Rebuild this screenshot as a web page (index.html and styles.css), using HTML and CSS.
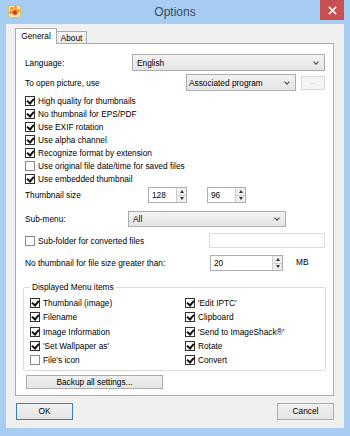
FILE: index.html
```html
<!DOCTYPE html>
<html lang="en">
<head>
    <meta charset="UTF-8">
    <title>Options</title>
    <link rel="stylesheet" href="styles.css">
</head>
<body>
    <div class="window">
        <!-- Title bar -->
        <div class="titlebar">
            <div class="tb-left">
                <svg class="app-icon" viewBox="0 0 14 14">
                    <rect x="0.5" y="0.5" width="13" height="13" rx="2" fill="#f7e7b0" stroke="#d9b860"/>
                    <circle cx="4" cy="4" r="2" fill="#f39a1e"/>
                    <circle cx="8" cy="3" r="1.8" fill="#f39a1e"/>
                    <circle cx="11" cy="6" r="1.8" fill="#f39a1e"/>
                    <circle cx="3" cy="8" r="1.8" fill="#f39a1e"/>
                    <circle cx="7.5" cy="8" r="3" fill="#e8602a"/>
                    <circle cx="7.5" cy="8" r="1.4" fill="#c8202a"/>
                </svg>
            </div>
            <div class="title">Options</div>
            <div class="tb-right">
                <div class="close">
                    <svg viewBox="0 0 10 10" width="9" height="9">
                        <path d="M1 1 L9 9 M9 1 L1 9" stroke="#fff" stroke-width="1.7"/>
                    </svg>
                </div>
            </div>
        </div>

        <!-- Client area -->
        <div class="client">
            <div class="tabs">
                <div class="tab active">General</div>
                <div class="tab">About</div>
            </div>
            <div class="panel">
                <div class="row row-lang">
                    <span class="lbl">Language:</span>
                    <div class="combo w-lang">English<span class="chev"></span></div>
                </div>
                <div class="row row-open">
                    <span class="lbl">To open picture, use</span>
                    <div class="combo w-open">Associated program<span class="chev"></span></div>
                    <div class="dots">...</div>
                </div>

                <div class="checks">
                    <div class="check on"><span class="box"></span>High quality for thumbnails</div>
                    <div class="check on"><span class="box"></span>No thumbnail for EPS/PDF</div>
                    <div class="check on"><span class="box"></span>Use EXIF rotation</div>
                    <div class="check on"><span class="box"></span>Use alpha channel</div>
                    <div class="check on"><span class="box"></span>Recognize format by extension</div>
                    <div class="check"><span class="box"></span>Use original file date/time for saved files</div>
                    <div class="check on"><span class="box"></span>Use embedded thumbnail</div>
                </div>

                <div class="row row-thumb">
                    <span class="lbl">Thumbnail size</span>
                    <div class="spin w-small"><span class="val">128</span><span class="arrows"><i class="up"></i><i class="down"></i></span></div>
                    <div class="spin w-small gap"><span class="val">96</span><span class="arrows"><i class="up"></i><i class="down"></i></span></div>
                </div>

                <div class="row row-sub">
                    <span class="lbl">Sub-menu:</span>
                    <div class="combo w-sub">All<span class="chev"></span></div>
                </div>

                <div class="row row-folder">
                    <div class="check"><span class="box"></span>Sub-folder for converted files</div>
                    <div class="textbox"></div>
                </div>

                <div class="row row-size">
                    <span class="lbl">No thumbnail for file size greater than:</span>
                    <div class="spin w-size"><span class="val">20</span><span class="arrows"><i class="up"></i><i class="down"></i></span></div>
                    <span class="unit">MB</span>
                </div>

                <fieldset class="group">
                    <legend>Displayed Menu items</legend>
                    <div class="items">
                        <div class="check on"><span class="box"></span>Thumbnail (image)</div>
                        <div class="check on"><span class="box"></span>'Edit IPTC'</div>
                        <div class="check on"><span class="box"></span>Filename</div>
                        <div class="check on"><span class="box"></span>Clipboard</div>
                        <div class="check on"><span class="box"></span>Image Information</div>
                        <div class="check on"><span class="box"></span>'Send to ImageShack®'</div>
                        <div class="check on"><span class="box"></span>'Set Wallpaper as'</div>
                        <div class="check on"><span class="box"></span>Rotate</div>
                        <div class="check"><span class="box"></span>File's icon</div>
                        <div class="check on"><span class="box"></span>Convert</div>
                    </div>
                </fieldset>

                <div class="btn backup">Backup all settings...</div>
            </div>

            <div class="footer">
                <div class="btn default">OK</div>
                <div class="btn">Cancel</div>
            </div>
        </div>
    </div>
</body>
</html>
```

FILE: styles.css
```css
* {
    box-sizing: border-box;
}

body {
    margin: 0;
    width: 350px;
    height: 436px;
    overflow: hidden;
    background: #a8cdf3;
    font-family: 'Liberation Sans', Arial, sans-serif;
    font-size: 8.3px;
    color: #000;
}

.window {
    height: 436px;
    display: flex;
    flex-direction: column;
}

/* Title bar */
.titlebar {
    height: 24px;
    display: grid;
    grid-template-columns: 1fr auto 1fr;
}

.tb-left {
    padding: 5px 0 0 8px;
}

.app-icon {
    width: 13px;
    height: 13px;
    display: block;
}

.title {
    font-size: 12px;
    line-height: 24px;
    color: #3a4a60;
}

.tb-right {
    display: flex;
    justify-content: flex-end;
    padding-right: 6px;
}

.close {
    width: 24px;
    height: 20px;
    background: #c75150;
    display: flex;
    align-items: center;
    justify-content: center;
}

/* Client area */
.client {
    flex: 1;
    margin: 0 6px 8px 6px;
    background: #f0f0f0;
    padding: 4px 10px 0 9px;
}

.tabs {
    display: flex;
    align-items: flex-end;
    height: 16px;
    position: relative;
    z-index: 1;
}

.tab {
    height: 12px;
    margin-bottom: 1px;
    width: 30px;
    border: 1px solid #adadad;
    border-left: none;
    border-bottom: none;
    background: linear-gradient(#f4f4f4, #e8e8e8);
    text-align: center;
    line-height: 12px;
}

.tab.active {
    height: 16px;
    margin-bottom: 0;
    width: 42px;
    border-left: 1px solid #adadad;
    background: #fff;
    line-height: 15px;
}

.panel {
    margin-top: -1px;
    height: 353px;
    border: 1px solid #adadad;
    background: #fff;
    padding: 10px 8px 0 9px;
}

.row {
    display: flex;
    align-items: center;
}

.lbl {
    flex-shrink: 0;
}

.row-lang {
    height: 17px;
}

.row-lang .lbl {
    width: 107px;
}

.row-open {
    height: 17px;
    margin-top: 3px;
}

.row-open .lbl {
    width: 161px;
}

.row-thumb {
    height: 16px;
    margin-top: 2px;
}

.row-thumb .lbl {
    width: 123px;
}

.row-sub {
    height: 16px;
    margin-top: 8px;
}

.row-sub .lbl {
    width: 103px;
}

.row-folder {
    height: 15px;
    margin-top: 6px;
}

.row-folder .check {
    width: 185px;
}

.row-size {
    height: 16px;
    margin-top: 7px;
}

.row-size .lbl {
    width: 185px;
}

/* Combo boxes */
.combo {
    height: 100%;
    border: 1px solid #acacac;
    background: linear-gradient(#f2f2f2, #e6e6e6);
    padding-left: 4px;
    display: flex;
    align-items: center;
    justify-content: space-between;
}

.chev {
    width: 4px;
    height: 4px;
    margin: 0 6px 2px 0;
    border-right: 1px solid #444;
    border-bottom: 1px solid #444;
    transform: rotate(45deg);
}

.w-lang {
    width: 193px;
}

.w-open {
    width: 110px;
    padding-left: 2px;
}

.w-sub {
    width: 158px;
}

.dots {
    width: 24px;
    height: 14px;
    margin-left: 5px;
    border: 1px solid #d9d9d9;
    background: #f4f4f4;
    color: #b0b0b0;
    text-align: center;
    line-height: 10px;
    font-size: 7px;
}

/* Checkboxes */
.checks {
    margin-top: 3px;
}

.check {
    height: 13px;
    display: flex;
    align-items: center;
    white-space: nowrap;
}

.box {
    width: 10px;
    height: 10px;
    margin-right: 3px;
    border: 1px solid #8a8a8a;
    background: #fff;
    flex-shrink: 0;
    position: relative;
}

.check.on .box {
    border-color: #333;
}

.check.on .box::after {
    content: "";
    position: absolute;
    left: 2px;
    top: 0px;
    width: 3px;
    height: 5px;
    border-right: 2px solid #111;
    border-bottom: 2px solid #111;
    transform: rotate(40deg);
}

/* Spin boxes */
.spin {
    height: 100%;
    border: 1px solid #abadb3;
    background: #fff;
    display: flex;
    justify-content: space-between;
}

.spin .val {
    padding-left: 3px;
    line-height: 14px;
}

.w-small {
    width: 39px;
}

.spin.gap {
    margin-left: 20px;
}

.w-size {
    width: 73px;
}

.arrows {
    width: 10px;
    display: flex;
    flex-direction: column;
    border-left: 1px solid #cfcfcf;
}

.arrows i {
    flex: 1;
    background: #efefef;
    border-bottom: 1px solid #cfcfcf;
    display: flex;
    align-items: center;
    justify-content: center;
}

.arrows i:last-child {
    border-bottom: none;
}

.arrows .up::after {
    content: "";
    border: 2px solid transparent;
    border-top: none;
    border-bottom: 3px solid #333;
}

.arrows .down::after {
    content: "";
    border: 2px solid transparent;
    border-bottom: none;
    border-top: 3px solid #333;
}

.unit {
    margin-left: 13px;
    margin-bottom: 3px;
}

.textbox {
    width: 116px;
    height: 100%;
    border: 1px solid #dcdcdc;
    background: #fff;
}

/* Group box */
.group {
    margin: 11px -1px 0 -2px;
    padding: 4px 0 3px 6px;
    border: 1px solid #dcdcdc;
    border-radius: 2px;
}

.group legend {
    padding: 0 2px;
    line-height: 10px;
}

.items {
    display: grid;
    grid-template-columns: 155px 1fr;
}

.items .check {
    height: 14.25px;
}

/* Buttons */
.btn {
    height: 17px;
    width: 57px;
    border: 1px solid #acacac;
    background: linear-gradient(#f0f0f0, #e5e5e5);
    text-align: center;
    line-height: 15px;
}

.btn.default {
    border-color: #3c7fb1;
}

.backup {
    width: 137px;
    height: 14px;
    line-height: 12px;
    margin: 4px 0 0 1px;
}

.footer {
    display: flex;
    justify-content: space-between;
    margin-top: 7px;
    padding-left: 1px;
}
```
